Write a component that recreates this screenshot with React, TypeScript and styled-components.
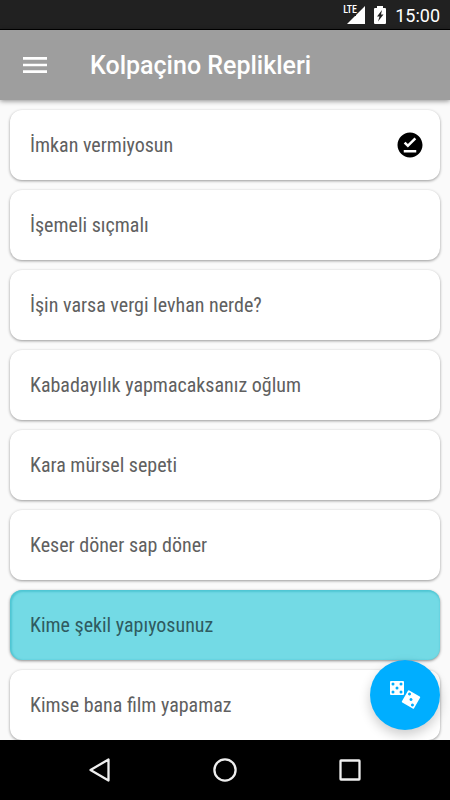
import React, { useState } from 'react';
import styled, { createGlobalStyle } from 'styled-components';
import { MdMenu, MdOfflinePin } from 'react-icons/md';

const GlobalStyle = createGlobalStyle`
  * { box-sizing: border-box; }
  body {
    margin: 0;
    background: #fafafa;
    font-family: Roboto, 'Noto Sans', sans-serif;
  }
`;

const BaseButton = styled.button`
  margin: 0;
  padding: 0;
  border: 0;
  font: inherit;
  cursor: pointer;
`;

const Screen = styled.div`
  display: flex;
  flex-direction: column;
  height: 100vh;
`;

const StatusBar = styled.div`
  display: flex;
  flex: none;
  align-items: center;
  justify-content: flex-end;
  gap: 9px;
  height: 30px;
  padding: 0 10px;
  background: #212121;
  box-shadow: inset 0 -1px 0 #000;
  color: #fff;
  font-size: 18px;
  line-height: 31px;
`;

const Signal = styled.div`
  position: relative;
  display: flex;
  align-items: center;
  height: 30px;
`;

const Network = styled.span`
  position: absolute;
  top: 4px;
  left: -4px;
  font-family: 'Roboto Condensed', Roboto, sans-serif;
  font-size: 10px;
  font-weight: 500;
  line-height: 12px;
`;

const AppBar = styled.header`
  position: relative;
  z-index: 1;
  display: flex;
  flex: none;
  align-items: center;
  gap: 35px;
  height: 70px;
  padding: 0 15px;
  background: #9e9e9e;
  color: #fff;
  box-shadow: 0 1px 5px rgba(0, 0, 0, 0.45);
`;

const MenuButton = styled(BaseButton)`
  display: flex;
  align-items: center;
  justify-content: center;
  width: 40px;
  height: 40px;
  background: none;
  color: inherit;
`;

const Title = styled.h1`
  margin: 0;
  font-size: 25px;
  font-weight: 500;
  line-height: 33px;
`;

const Content = styled.main`
  position: relative;
  flex: 1;
  min-height: 0;
  overflow: hidden;
`;

const QuoteList = styled.ul`
  display: flex;
  flex-direction: column;
  gap: 10px;
  height: 100%;
  margin: 0;
  padding: 10px 10px 0;
  overflow-y: auto;
  scrollbar-width: none;
  list-style: none;
`;

const QuoteCard = styled(BaseButton)<{ $active: boolean }>`
  display: flex;
  align-items: center;
  justify-content: space-between;
  width: 100%;
  height: 70px;
  padding: 0 15px 0 20px;
  border-radius: 12px;
  background: ${({ $active }) => ($active ? '#73dae5' : '#fff')};
  color: ${({ $active }) => ($active ? '#2f5b60' : '#606060')};
  box-shadow: ${({ $active }) =>
    $active
      ? 'inset 1px 1px 2px 1px #4fc6d3, 0 1px 3px rgba(0, 0, 0, 0.45)'
      : '0 1px 3px rgba(0, 0, 0, 0.4)'};
  font-family: 'Roboto Condensed', Roboto, sans-serif;
  font-size: 20px;
  line-height: 24px;
  text-align: left;
`;

const Marker = styled.span`
  display: flex;
  color: #000;
`;

const Fab = styled(BaseButton)`
  position: absolute;
  right: 10px;
  bottom: 10px;
  display: flex;
  align-items: center;
  justify-content: center;
  width: 70px;
  height: 70px;
  border-radius: 50%;
  background: #00aeff;
  box-shadow: 0 5px 12px rgba(0, 0, 0, 0.2);
`;

const NavBar = styled.nav`
  position: relative;
  display: flex;
  flex: none;
  align-items: center;
  justify-content: center;
  gap: 85px;
  height: 60px;
  background: #000;
`;

const NavButton = styled(BaseButton)`
  display: flex;
  align-items: center;
  justify-content: center;
  width: 40px;
  height: 40px;
  background: none;
`;

const quotes = [
  'İmkan vermiyosun',
  'İşemeli sıçmalı',
  'İşin varsa vergi levhan nerde?',
  'Kabadayılık yapmacaksanız oğlum',
  'Kara mürsel sepeti',
  'Keser döner sap döner',
  'Kime şekil yapıyosunuz',
  'Kimse bana film yapamaz',
];

const fivePips = [
  [3, 3],
  [11, 3],
  [7, 7],
  [3, 11],
  [11, 11],
];

const threePips = [
  [3, 3],
  [7, 7],
  [11, 11],
];

function Die({ pips, transform }: { pips: number[][]; transform: string }) {
  return (
    <g transform={transform}>
      <rect width="14" height="14" rx="1" fill="#fff" />
      {pips.map(([x, y]) => (
        <circle key={`${x}-${y}`} cx={x} cy={y} r="1.5" fill="#00aeff" />
      ))}
    </g>
  );
}

function Dice() {
  return (
    <svg width="32" height="32" viewBox="0 0 32 32" aria-hidden="true">
      <Die pips={fivePips} transform="translate(1 2)" />
      <Die pips={threePips} transform="translate(22 20.5) rotate(30) translate(-7 -7)" />
    </svg>
  );
}

export default function App() {
  const [active, setActive] = useState(6);

  return (
    <Screen>
      <GlobalStyle />
      <StatusBar>
        <Signal>
          <Network>LTE</Network>
          <svg width="18" height="18" viewBox="0 0 18 18" aria-hidden="true">
            <path d="M18 0V18H0L8 10H9V9Z" fill="#fff" />
          </svg>
        </Signal>
        <svg width="12" height="18" viewBox="0 0 12 18" aria-hidden="true">
          <path
            d="M3 0h6v2H11a1 1 0 0 1 1 1V17a1 1 0 0 1-1 1H1a1 1 0 0 1-1-1V3a1 1 0 0 1 1-1h2z"
            fill="#fff"
          />
          <path d="M8 4 3 10.500h2.500L4 15.500 9.500 8.500H7z" fill="#212121" />
        </svg>
        <time>15:00</time>
      </StatusBar>
      <AppBar>
        <MenuButton type="button" aria-label="Menü">
          <MdMenu size={32} />
        </MenuButton>
        <Title>Kolpaçino Replikleri</Title>
      </AppBar>
      <Content>
        <QuoteList>
          {quotes.map((quote, i) => (
            <li key={quote}>
              <QuoteCard type="button" $active={i === active} onClick={() => setActive(i)}>
                <span>{quote}</span>
                {i === 0 && (
                  <Marker>
                    <MdOfflinePin size={30} />
                  </Marker>
                )}
              </QuoteCard>
            </li>
          ))}
        </QuoteList>
        <Fab type="button" aria-label="Rastgele">
          <Dice />
        </Fab>
      </Content>
      <NavBar>
        <NavButton type="button" aria-label="Geri">
          <svg width="24" height="26" viewBox="0 0 24 26" fill="none" stroke="#eee" strokeWidth="2.300" strokeLinejoin="round">
            <path d="M20.500 2.500V23.500L2.500 13Z" />
          </svg>
        </NavButton>
        <NavButton type="button" aria-label="Ana ekran">
          <svg width="24" height="24" viewBox="0 0 24 24" fill="none" stroke="#eee" strokeWidth="2.300">
            <circle cx="12" cy="12" r="10.600" />
          </svg>
        </NavButton>
        <NavButton type="button" aria-label="Son uygulamalar">
          <svg width="22" height="22" viewBox="0 0 22 22" fill="none" stroke="#eee" strokeWidth="2.300" strokeLinejoin="round">
            <rect x="1.500" y="1.500" width="19" height="19" rx="0.500" />
          </svg>
        </NavButton>
      </NavBar>
    </Screen>
  );
}
